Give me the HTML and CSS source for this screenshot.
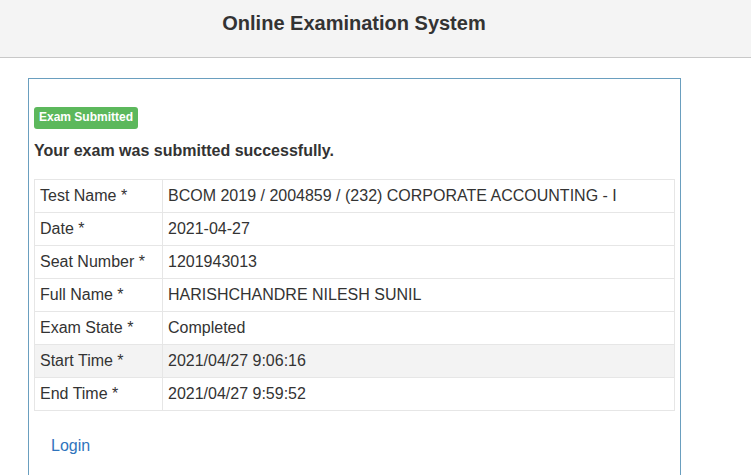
FILE: index.html
```html
<!DOCTYPE html>
<html>
<head>
<meta charset="utf-8">
<title>Online Examination System</title>
<link rel="stylesheet" href="styles.css">
</head>
<body>
<header class="topbar">
  <h1 class="title">Online Examination System</h1>
</header>
<main class="panel">
  <div class="badge-row"><span class="badge">Exam Submitted</span></div>
  <p class="message">Your exam was submitted successfully.</p>
  <table class="details">
    <tr><td class="label">Test Name *</td><td>BCOM 2019 / 2004859 / (232) CORPORATE ACCOUNTING - I</td></tr>
    <tr><td class="label">Date *</td><td>2021-04-27</td></tr>
    <tr><td class="label">Seat Number *</td><td>1201943013</td></tr>
    <tr><td class="label">Full Name *</td><td>HARISHCHANDRE NILESH SUNIL</td></tr>
    <tr><td class="label">Exam State *</td><td>Completed</td></tr>
    <tr class="shaded"><td class="label">Start Time *</td><td>2021/04/27 9:06:16</td></tr>
    <tr><td class="label">End Time *</td><td>2021/04/27 9:59:52</td></tr>
  </table>
  <div class="actions"><a class="login" href="#">Login</a></div>
</main>
</body>
</html>
```
FILE: styles.css
```css
html, body {
  margin: 0;
  padding: 0;
  background: #fff;
  font-family: "Liberation Sans", Arial, Helvetica, sans-serif;
  color: #333;
  font-size: 16px;
}
body {
  height: 475px;
  overflow: hidden;
}
.topbar {
  height: 57px;
  background: #f4f4f4;
  border-bottom: 1px solid #c8c8c8;
  display: flex;
  align-items: center;
  justify-content: center;
  padding-right: 43px;
}
.title {
  margin: 0;
  font-size: 20px;
  font-weight: bold;
  color: #333;
  line-height: 24px;
  position: relative;
  top: -6px;
}
.panel {
  margin: 20px 0 0 28px;
  width: 641px;
  height: 396px;
  border: 1px solid #6a9fbf;
  border-bottom: none;
  padding: 0 5px;
}
.badge-row {
  padding-top: 28px;
  line-height: 22px;
  height: 22px;
}
.badge {
  display: inline-block;
  background: #5cb85c;
  color: #fff;
  font-size: 12px;
  font-weight: bold;
  line-height: 15px;
  padding: 3px 5px 4px;
  border-radius: 3px;
  vertical-align: top;
}
.message {
  margin: 11px 0 0;
  font-size: 16px;
  font-weight: bold;
  line-height: 22px;
  color: #333;
}
.details {
  margin-top: 17px;
  width: 641px;
  border-collapse: collapse;
  border: 1px solid #e6e6e6;
}
.details td {
  border: 1px solid #e6e6e6;
  padding: 5px 5px;
  height: 22px;
  line-height: 22px;
  font-size: 16px;
  color: #333;
  vertical-align: top;
}
.details td.label {
  width: 117px;
}
.details tr.shaded td {
  background: #f3f3f3;
}
.actions {
  margin-top: 24px;
  padding-left: 17px;
  line-height: 22px;
}
.login {
  color: #2f74bd;
  text-decoration: none;
  font-size: 16px;
}
```
